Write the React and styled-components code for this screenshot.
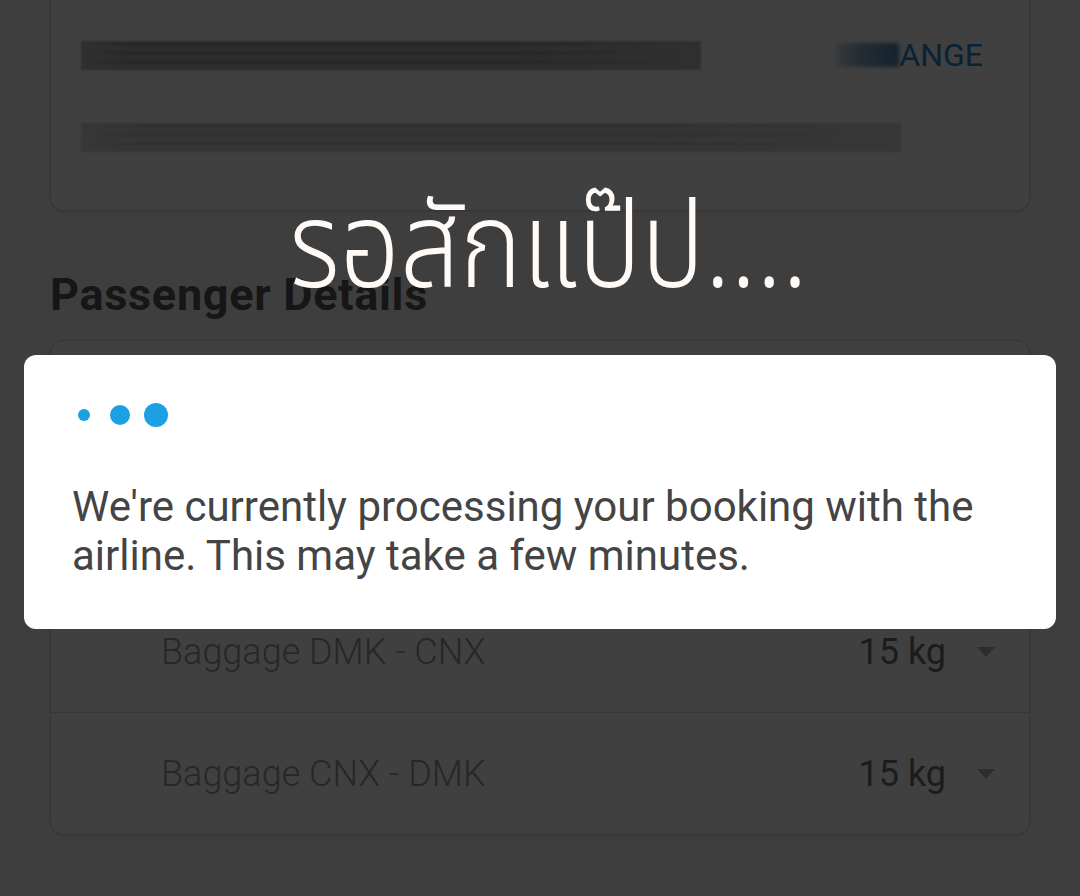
import React from "react"
import styled, { createGlobalStyle } from "styled-components"

const GlobalStyle = createGlobalStyle`
  html, body {
    margin: 0;
    padding: 0;
    background: #f8f8f8;
    font-family: Roboto, "Noto Sans", "Liberation Sans", sans-serif;
    overflow: hidden;
  }
`

const Page = styled.div`
  height: 896px;
  padding: 0 50px;
  box-sizing: border-box;
`

const InfoCard = styled.div`
  height: 211px;
  box-sizing: border-box;
  background: #ffffff;
  border: 1px solid #d8d8d8;
  border-top: none;
  border-radius: 0 0 14px 14px;
  box-shadow: 0 1px 3px rgba(0, 0, 0, 0.12);
  padding: 40px 46px 0 30px;
  display: flex;
  flex-direction: column;
  gap: 52px;
`

const InfoRow = styled.div`
  display: flex;
  align-items: center;
  justify-content: space-between;
  height: 30px;
`

// redacted text: a horizontal smear
const BlurLine = styled.div`
  width: ${p => p.$w}px;
  height: 29px;
  background:
    linear-gradient(90deg, ${p => p.$tone} 0%, transparent 8%, transparent 70%, ${p => p.$tone} 100%),
    repeating-linear-gradient(
      180deg,
      ${p => p.$tone} 0px,
      ${p => p.$dark} 3px,
      ${p => p.$tone} 6px,
      ${p => p.$mid} 9px
    );
  filter: blur(1.2px);
`

const ChangeLink = styled.span`
  font-size: 32px;
  font-weight: 400;
  color: #2a88d0;
  display: flex;
  align-items: center;
`

const Smudge = styled.span`
  display: inline-block;
  width: 64px;
  height: 24px;
  background: linear-gradient(90deg, #e0e4e8, #8fb0c8 40%, #4f86b0);
  filter: blur(2px);
`

const SectionTitle = styled.h2`
  margin: 59px 0 20px;
  font-size: 45px;
  line-height: 50px;
  font-weight: 700;
  letter-spacing: 0.7px;
  color: #575757;
`

const PassengerCard = styled.div`
  background: #ffffff;
  border: 1px solid #d8d8d8;
  border-radius: 14px;
  box-shadow: 0 1px 3px rgba(0, 0, 0, 0.12);
  overflow: hidden;
`

const PassengerRow = styled.div`
  height: 124px;
  display: flex;
  align-items: center;
  padding: 0 40px;
  font-size: 36px;
  color: #555;
  border-bottom: 1px solid #e0e0e0;
`

const BaggageRow = styled.div`
  height: 121px;
  display: flex;
  align-items: center;
  padding: 0 34px 0 110px;
  font-size: 36px;
  font-weight: 300;
  & + & {
    border-top: 1px solid #dcdcdc;
  }
`

const BaggageLabel = styled.span`
  flex: 1;
  color: #9c9c9c;
`

const Weight = styled.span`
  color: #707070;
  font-weight: 400;
  margin-right: 31px;
`

const Caret = styled.span`
  width: 0;
  height: 0;
  border-left: 9px solid transparent;
  border-right: 9px solid transparent;
  border-top: 10px solid #b4b4b4;
`

const Overlay = styled.div`
  position: fixed;
  inset: 0;
  background: rgba(0, 0, 0, 0.75);
  display: flex;
  flex-direction: column;
  align-items: center;
`

const WaitTitle = styled.div`
  margin-top: 176px;
  font-family: "Noto Sans Thai", "Noto Sans Thai UI", "Noto Sans", sans-serif;
  font-size: 120px;
  font-weight: 300;
  line-height: 150px;
  height: 180px;
  color: #fffaf6;
  padding-left: 20px;
  transform: scaleX(0.88);
`

const Dialog = styled.div`
  position: absolute;
  top: 355px;
  left: 24px;
  right: 24px;
  height: 274px;
  box-sizing: border-box;
  background: #ffffff;
  border-radius: 12px;
  padding: 48px 48px 0 48px;
`

const Dots = styled.div`
  display: flex;
  align-items: center;
  height: 24px;
  margin-left: -6px;
`

const DotSlot = styled.span`
  width: 36px;
  display: flex;
  justify-content: center;
`

const Dot = styled.span`
  width: ${p => p.$size}px;
  height: ${p => p.$size}px;
  border-radius: 50%;
  background: #1ba1e2;
`

const Message = styled.p`
  margin: 55px 0 0;
  font-size: 42px;
  line-height: 49px;
  color: #444444;
`

export default function App() {
  return (
    <>
      <GlobalStyle />
      <Page>
        <InfoCard>
          <InfoRow>
            <BlurLine $w={620} $tone="#bdbdbd" $dark="#8c8c8c" $mid="#a8a8a8" />
            <ChangeLink>
              <Smudge />
              ANGE
            </ChangeLink>
          </InfoRow>
          <InfoRow>
            <BlurLine $w={820} $tone="#dadada" $dark="#b4b4b4" $mid="#cacaca" />
          </InfoRow>
        </InfoCard>

        <SectionTitle>Passenger Details</SectionTitle>

        <PassengerCard>
          <PassengerRow>Passenger 1 · Adult</PassengerRow>
          <PassengerRow>Add-ons</PassengerRow>
          <BaggageRow>
            <BaggageLabel>Baggage DMK - CNX</BaggageLabel>
            <Weight>15 kg</Weight>
            <Caret />
          </BaggageRow>
          <BaggageRow>
            <BaggageLabel>Baggage CNX - DMK</BaggageLabel>
            <Weight>15 kg</Weight>
            <Caret />
          </BaggageRow>
        </PassengerCard>
      </Page>

      <Overlay>
        <WaitTitle>รอสักแป๊ป....</WaitTitle>
        <Dialog>
          <Dots>
            <DotSlot><Dot $size={12} /></DotSlot>
            <DotSlot><Dot $size={20} /></DotSlot>
            <DotSlot><Dot $size={24} /></DotSlot>
          </Dots>
          <Message>
            We're currently processing your booking with the airline. This may
            take a few minutes.
          </Message>
        </Dialog>
      </Overlay>
    </>
  )
}
